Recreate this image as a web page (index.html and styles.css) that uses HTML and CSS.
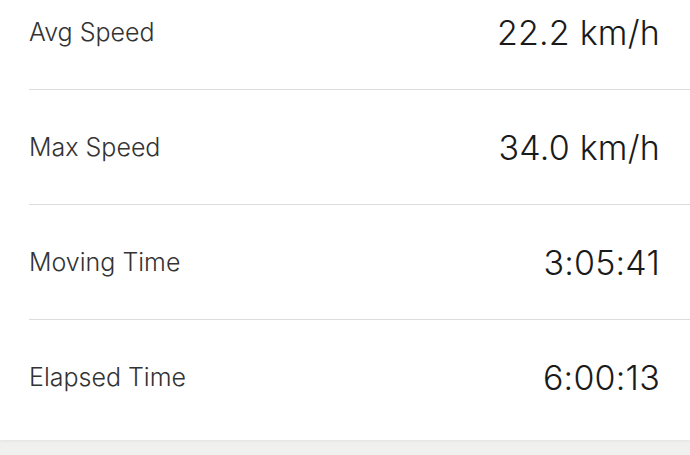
FILE: index.html
```html
<!DOCTYPE html>
<html lang="en">
<head>
<meta charset="utf-8">
<link rel="stylesheet" href="styles.css">
</head>
<body>
<div class="card">
  <div class="row"><span class="label">Avg Speed</span><span class="value">22.2 km/h</span></div>
  <div class="row"><span class="label">Max Speed</span><span class="value">34.0 km/h</span></div>
  <div class="row"><span class="label">Moving Time</span><span class="value">3:05:41</span></div>
  <div class="row last"><span class="label">Elapsed Time</span><span class="value">6:00:13</span></div>
</div>
<div class="footer"></div>
</body>
</html>
```
FILE: styles.css
```css
html, body {
  margin: 0;
  padding: 0;
  background: #f0f0ee;
  width: 690px;
  height: 455px;
  overflow: hidden;
}
.card {
  background: #ffffff;
  margin-top: -25px;
  padding-left: 29px;
  padding-right: 30px;
  padding-bottom: 6px;
  box-shadow: 0 1px 3px rgba(0,0,0,0.06);
}
.row {
  display: flex;
  align-items: center;
  justify-content: space-between;
  height: 114px;
  border-bottom: 1px solid #dcdcda;
  margin-right: -30px;
  padding-right: 30px;
}
.row.last {
  border-bottom: none;
}
.label {
  font-family: Inter, "Liberation Sans", sans-serif;
  font-size: 25px;
  font-weight: 350;
  color: #333333;
}
.value {
  font-family: Inter, "Liberation Sans", sans-serif;
  font-size: 34px;
  font-weight: 350;
  color: #1a1a1a;
  letter-spacing: 0.2px;
}
```
